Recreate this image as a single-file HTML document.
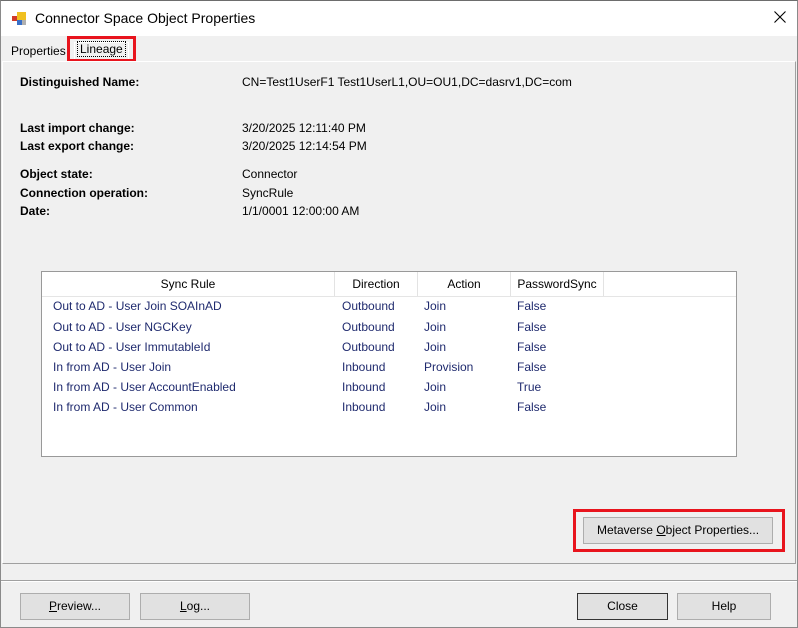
<!DOCTYPE html>
<html><head><meta charset="utf-8"><style>
*{margin:0;padding:0;box-sizing:border-box}
body{width:798px;height:628px;background:#f0f0f0;font-family:"Liberation Sans",sans-serif;font-size:12px;color:#000;position:relative;overflow:hidden}
.a{position:absolute;white-space:nowrap}
.b{font-weight:bold}
.btn{position:absolute;height:27px;border:1px solid #adadad;background:#e1e1e1;text-align:center;line-height:25px;font-size:12px}
.row span{position:absolute;color:#1f2a6e}
.hd{position:absolute;top:0;height:24px;line-height:24px;text-align:center;border-right:1px solid #e3e3e3}
</style></head><body>
<div class="a" style="left:0;top:0;width:798px;height:628px;border:1px solid #8a8a8a;border-top:1px solid #6d6d6d"></div>
<div class="a" style="left:1px;top:1px;width:796px;height:35px;background:#fff"></div>
<svg class="a" style="left:12px;top:11px" width="16" height="15"><rect x="0" y="5" width="5" height="5" fill="#d03a2a"/><rect x="5" y="1" width="9" height="8" fill="#f0c020"/><rect x="5" y="9" width="5" height="5" fill="#3a70c8"/><rect x="10" y="9" width="4" height="5" fill="#b0b0b0"/></svg>
<div class="a" style="left:35px;top:10px;font-size:14px">Connector Space Object Properties</div>
<svg class="a" style="left:774px;top:11px" width="12" height="12"><path d="M0.5 0.5L11.5 11.5M11.5 0.5L0.5 11.5" stroke="#000" stroke-width="1.1"/></svg>
<div class="a" style="left:11px;top:44px">Properties</div>
<div class="a" style="left:74px;top:42px;width:55px;height:19px;background:#f0f0f0;border:1px solid #fff;border-bottom:none"></div>
<div class="a" style="left:77px;top:41px;border:1px dotted #000;padding:0 2px">Lineage</div>
<div class="a" style="left:67px;top:36px;width:69px;height:26px;border:3px solid #e8141d"></div>
<div class="a" style="left:2px;top:61px;width:794px;height:503px;border:1px solid #a0a0a0;border-top-color:#fff;border-left-color:#fff"></div>
<div class="a b" style="left:20px;top:75px">Distinguished Name:</div>
<div class="a" style="left:242px;top:75px">CN=Test1UserF1 Test1UserL1,OU=OU1,DC=dasrv1,DC=com</div>
<div class="a b" style="left:20px;top:121px">Last import change:</div>
<div class="a" style="left:242px;top:121px">3/20/2025 12:11:40 PM</div>
<div class="a b" style="left:20px;top:139px">Last export change:</div>
<div class="a" style="left:242px;top:139px">3/20/2025 12:14:54 PM</div>
<div class="a b" style="left:20px;top:167px">Object state:</div>
<div class="a" style="left:242px;top:167px">Connector</div>
<div class="a b" style="left:20px;top:186px">Connection operation:</div>
<div class="a" style="left:242px;top:186px">SyncRule</div>
<div class="a b" style="left:20px;top:204px">Date:</div>
<div class="a" style="left:242px;top:204px">1/1/0001 12:00:00 AM</div>
<div class="a" style="left:41px;top:271px;width:696px;height:186px;background:#fff;border:1px solid #999">
 <div class="a" style="left:0;top:0;width:694px;height:25px;border-bottom:1px solid #e5e5e5">
  <div class="hd" style="left:0;width:293px">Sync Rule</div>
  <div class="hd" style="left:293px;width:83px">Direction</div>
  <div class="hd" style="left:376px;width:93px">Action</div>
  <div class="hd" style="left:469px;width:93px">PasswordSync</div>
 </div>
 <div class="row">
  <span style="left:11px;top:27px">Out to AD - User Join SOAInAD</span><span style="left:300px;top:27px">Outbound</span><span style="left:382px;top:27px">Join</span><span style="left:475px;top:27px">False</span>
  <span style="left:11px;top:48px">Out to AD - User NGCKey</span><span style="left:300px;top:48px">Outbound</span><span style="left:382px;top:48px">Join</span><span style="left:475px;top:48px">False</span>
  <span style="left:11px;top:68px">Out to AD - User ImmutableId</span><span style="left:300px;top:68px">Outbound</span><span style="left:382px;top:68px">Join</span><span style="left:475px;top:68px">False</span>
  <span style="left:11px;top:88px">In from AD - User Join</span><span style="left:300px;top:88px">Inbound</span><span style="left:382px;top:88px">Provision</span><span style="left:475px;top:88px">False</span>
  <span style="left:11px;top:108px">In from AD - User AccountEnabled</span><span style="left:300px;top:108px">Inbound</span><span style="left:382px;top:108px">Join</span><span style="left:475px;top:108px">True</span>
  <span style="left:11px;top:128px">In from AD - User Common</span><span style="left:300px;top:128px">Inbound</span><span style="left:382px;top:128px">Join</span><span style="left:475px;top:128px">False</span>
 </div>
</div>
<div class="btn" style="left:583px;top:517px;width:190px">Metaverse <u>O</u>bject Properties...</div>
<div class="a" style="left:573px;top:509px;width:212px;height:43px;border:3px solid #e8141d"></div>
<div class="a" style="left:1px;top:580px;width:796px;height:2px;border-top:1px solid #a0a0a0;border-bottom:1px solid #fff"></div>
<div class="btn" style="left:20px;top:593px;width:110px"><u>P</u>review...</div>
<div class="btn" style="left:140px;top:593px;width:110px"><u>L</u>og...</div>
<div class="btn" style="left:577px;top:593px;width:91px;border-color:#333">Close</div>
<div class="btn" style="left:677px;top:593px;width:94px">Help</div>
</body></html>
